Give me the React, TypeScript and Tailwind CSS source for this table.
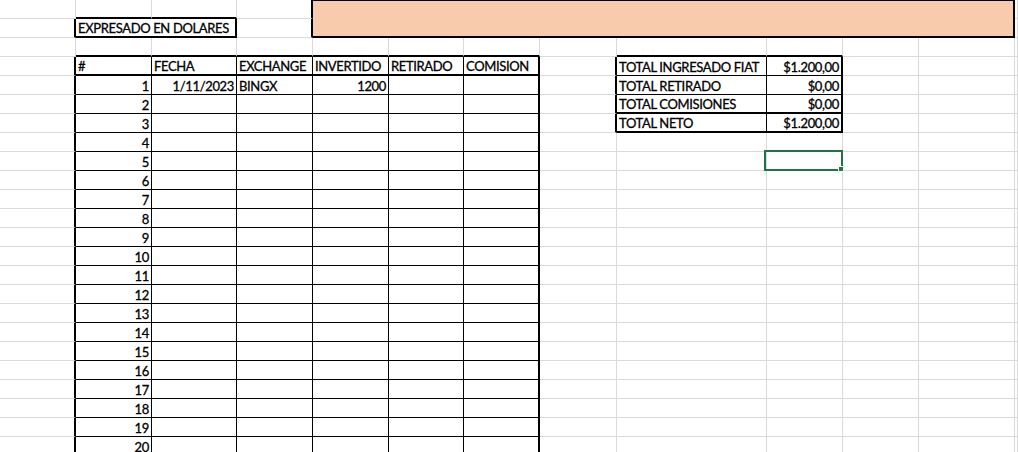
import React from "react";

type B = "g" | "t" | "k" | "n"; // gray, thin black, thick black, none

const NROWS = 24;
const NCOLS = 13;

function rightB(r: number, c: number): B {
  if (c === 1 && (r === 2 || r >= 4)) return "k";
  if (c >= 2 && c <= 6 && r >= 4) return "t";
  if (c === 7 && r >= 4) return "k";
  if (c === 8 && r >= 4 && r <= 7) return "k";
  if (c === 9 && r >= 4 && r <= 7) return "t";
  if (c === 10 && r >= 4 && r <= 7) return "k";
  if (c === 4 && (r === 1 || r === 2)) return "k";
  return "g";
}

function bottomB(r: number, c: number): B {
  if (r === 1 && (c === 2 || c === 3)) return "k";
  if (r === 3 && ((c >= 2 && c <= 7) || c === 9 || c === 10)) return "k";
  if (r === 4 && c >= 2 && c <= 7) return "k";
  if (r === 4 && (c === 9 || c === 10)) return "t";
  if (r >= 5 && c >= 2 && c <= 7) return "t";
  if (r === 5 && (c === 9 || c === 10)) return "t";
  if ((r === 6 || r === 7) && (c === 9 || c === 10)) return "k";
  return "g";
}

const RC: Record<B, string> = {
  g: "border-r border-r-[#dadada]",
  t: "border-r border-r-black",
  k: "border-r-2 border-r-black",
  n: "",
};
const BC: Record<B, string> = {
  g: "border-b border-b-[#dadada]",
  t: "border-b border-b-black",
  k: "border-b-2 border-b-black",
  n: "",
};

type Content = { text: string; right?: boolean };

const data: Record<string, Content> = {
  "4-2": { text: "#" },
  "4-3": { text: "FECHA" },
  "4-4": { text: "EXCHANGE" },
  "4-5": { text: "INVERTIDO" },
  "4-6": { text: "RETIRADO" },
  "4-7": { text: "COMISION" },
  "5-3": { text: "1/11/2023", right: true },
  "5-4": { text: "BINGX" },
  "5-5": { text: "1200", right: true },
  "4-9": { text: "TOTAL INGRESADO FIAT" },
  "4-10": { text: "$1.200,00", right: true },
  "5-9": { text: "TOTAL RETIRADO" },
  "5-10": { text: "$0,00", right: true },
  "6-9": { text: "TOTAL COMISIONES" },
  "6-10": { text: "$0,00", right: true },
  "7-9": { text: "TOTAL NETO" },
  "7-10": { text: "$1.200,00", right: true },
};
for (let i = 1; i <= 20; i++) data[`${i + 4}-2`] = { text: String(i), right: true };

function Text({ c }: { c?: Content }) {
  if (!c) return null;
  return (
    <span
      className={`flex h-full w-full items-end whitespace-nowrap pb-[1px] pl-[2px] pr-[2px] leading-[13px] ${
        c.right ? "justify-end" : "justify-start"
      }`}
    >
      {c.text}
    </span>
  );
}

export default function App() {
  const cells: React.ReactNode[] = [];
  for (let r = 1; r <= NROWS; r++) {
    for (let c = 1; c <= NCOLS; c++) {
      if (r === 1 && c === 5) {
        cells.push(
          <div
            key="orange"
            className="col-span-8 row-span-2 border-t border-t-black border-r-2 border-r-black border-b-2 border-b-black bg-[#f8cbad]"
          />
        );
        continue;
      }
      if ((r === 1 || r === 2) && c > 5 && c <= 12) continue;
      if (r === 2 && c === 5) continue;
      if (r === 2 && c === 2) {
        cells.push(
          <div
            key="expr"
            className="col-span-2 border-r-2 border-r-black border-b-2 border-b-black"
          >
            <Text c={{ text: "EXPRESADO EN DOLARES" }} />
          </div>
        );
        continue;
      }
      if (r === 2 && c === 3) continue;
      const key = `${r}-${c}`;
      const sel = r === 9 && c === 10;
      cells.push(
        <div
          key={key}
          className={`${RC[rightB(r, c)]} ${BC[bottomB(r, c)]} ${sel ? "relative" : ""} min-w-0 overflow-visible`}
        >
          <Text c={data[key]} />
          {sel && (
            <div className="absolute -left-[3px] -top-[2px] -right-[1px] -bottom-[1px] border-2 border-[#217346]">
              <div className="absolute -right-[3px] -bottom-[3px] h-[6px] w-[6px] border border-white bg-[#217346]" />
            </div>
          )}
        </div>
      );
    }
  }

  return (
    <div
      className="h-[452px] w-[1018px] overflow-hidden bg-white text-[13px] tracking-[-0.35px] text-black [-webkit-text-stroke:0.3px_black]"
      style={{ fontFamily: "Lato, 'Liberation Sans', sans-serif" }}
    >
      <div className="grid grid-cols-[76px_76px_85px_76px_76px_75px_76px_77px_150px_76px_76px_96px_1fr] auto-rows-[19px]">
        {cells}
      </div>
    </div>
  );
}
